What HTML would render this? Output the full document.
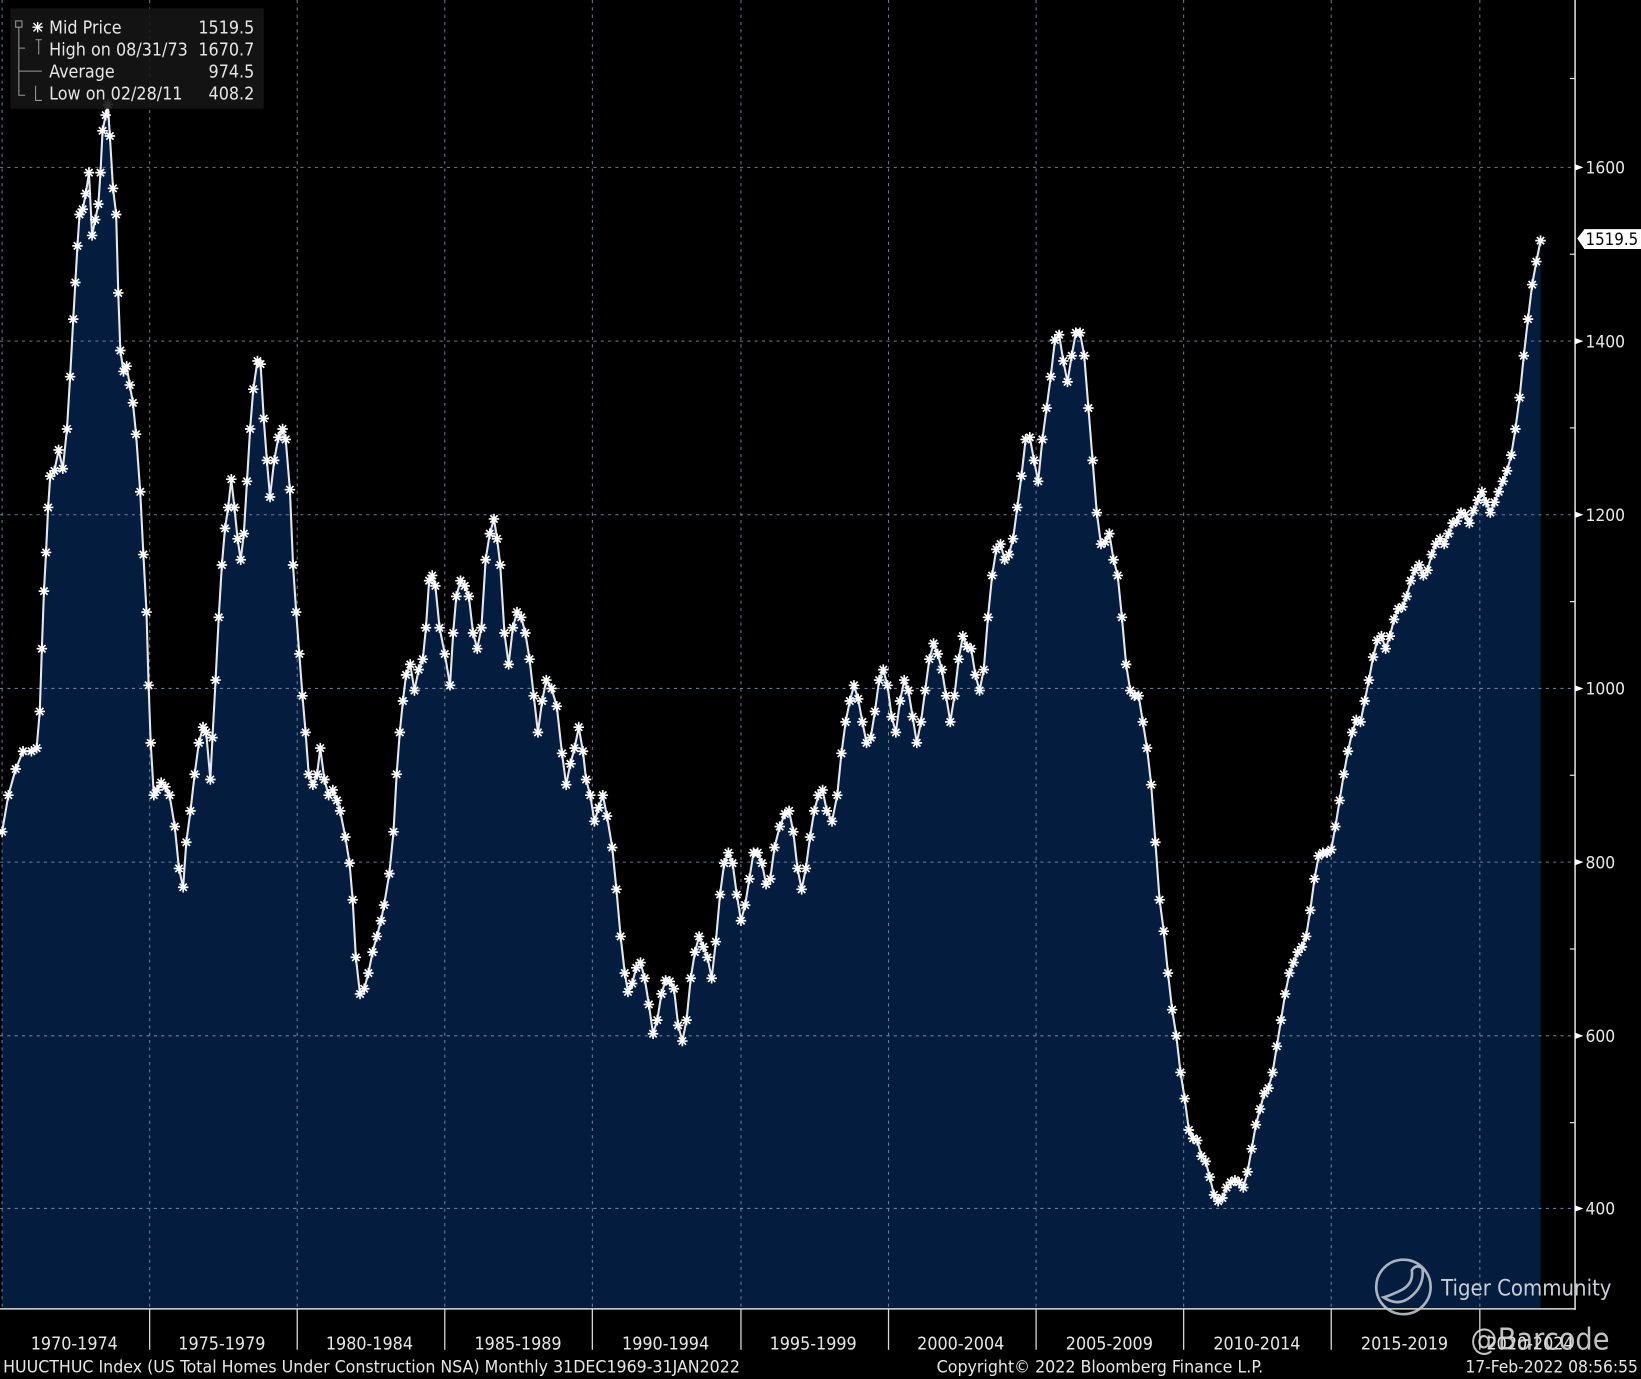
<!DOCTYPE html>
<html><head><meta charset="utf-8">
<style>
html,body{margin:0;padding:0;background:#000;}
body{width:1641px;height:1379px;overflow:hidden;}
svg{display:block;}
text{font-family:"DejaVu Sans Condensed","Liberation Sans",sans-serif;}
</style></head>
<body>
<svg width="1641" height="1379" viewBox="0 0 1568 1318" preserveAspectRatio="none" xmlns="http://www.w3.org/2000/svg">
<defs>
<marker id="st" markerWidth="12" markerHeight="12" refX="6" refY="6" markerUnits="userSpaceOnUse">
<path d="M1,6H11M6,1V11M2.5,2.5L9.5,9.5M2.5,9.5L9.5,2.5" stroke="#fff" stroke-width="1.6"/>
<circle cx="6" cy="6" r="1.8" fill="#fff"/>
</marker>
</defs>
<rect width="1568" height="1318" fill="#000"/>
<polygon fill="#041d3f" points="2,1250 2,795 8,760 15,735 22,718 30,718 35,715 38,680 40,620 42,565 44,528 46,485 48,455 52,450 56,430 60,448 64,410 67,360 70,305 72,270 74,235 76,205 79,200 82,185 85,165 88,225 91,210 94,195 96,165 98,125 101,110 103,100 105,130 108,180 111,205 113,280 115,335 118,355 121,350 124,368 127,385 130,415 134,470 137,530 140,585 142,655 144,710 147,760 150,755 154,748 158,752 162,760 167,790 171,830 175,848 178,805 182,775 186,740 190,710 194,695 197,700 201,745 203,705 206,650 209,590 212,540 215,505 218,485 221,458 224,485 227,515 230,535 233,510 236,460 239,410 242,372 246,345 249,348 252,400 255,440 258,475 262,440 266,418 270,410 273,420 277,468 280,540 283,585 286,625 289,665 292,700 295,740 299,750 303,740 306,715 310,745 314,760 318,755 322,765 325,775 330,800 334,825 337,860 340,915 344,950 348,945 352,930 356,910 360,895 364,880 367,865 372,835 376,795 379,740 382,700 385,670 388,645 392,635 396,660 400,640 404,630 407,600 410,555 413,550 416,560 420,600 425,625 430,655 433,605 436,570 440,555 444,560 448,570 452,605 456,620 460,600 464,535 468,510 472,496 475,515 478,540 482,605 486,635 490,600 494,585 498,590 502,605 506,630 510,665 514,700 518,670 522,650 527,658 532,675 537,720 541,750 545,730 549,715 553,695 557,718 560,745 564,760 568,785 572,772 576,760 580,780 585,810 589,850 593,895 597,930 600,948 604,940 608,925 612,920 616,935 620,960 624,988 628,975 632,950 636,937 640,938 644,945 648,980 652,995 656,975 660,935 664,910 668,895 672,905 676,915 680,935 684,900 688,855 692,825 696,815 700,825 704,855 708,880 712,865 716,840 720,815 724,815 728,825 732,845 736,840 740,810 745,790 750,778 754,775 758,795 762,830 766,850 770,830 774,800 778,775 782,760 786,755 790,775 795,785 800,760 804,720 808,690 812,670 816,655 820,668 824,690 828,710 832,705 836,680 840,650 844,640 848,655 852,685 856,700 860,670 864,650 868,660 872,685 876,710 880,690 884,660 888,630 892,615 896,625 900,640 904,665 908,690 912,665 916,630 920,608 924,618 928,620 932,645 936,660 940,640 944,590 948,550 952,525 956,520 960,535 964,530 968,515 972,485 976,455 980,420 984,418 988,440 992,460 996,420 1000,390 1004,360 1008,325 1012,320 1016,345 1020,365 1024,340 1028,318 1032,318 1036,340 1040,390 1044,440 1048,490 1052,520 1056,518 1060,510 1064,535 1068,550 1072,590 1076,635 1080,660 1084,665 1088,665 1092,690 1096,715 1100,750 1104,805 1108,860 1112,890 1116,930 1120,965 1124,990 1128,1025 1132,1050 1136,1080 1140,1088 1144,1090 1148,1105 1152,1110 1156,1125 1160,1142 1164,1148 1168,1145 1172,1135 1176,1130 1180,1128 1184,1130 1188,1135 1192,1120 1196,1098 1200,1075 1204,1060 1208,1045 1212,1040 1216,1025 1220,1000 1224,975 1228,950 1232,930 1236,920 1240,910 1244,905 1248,895 1252,870 1256,840 1260,818 1264,815 1268,815 1272,812 1276,790 1280,765 1284,740 1288,718 1292,700 1296,688 1300,690 1304,670 1308,650 1312,628 1316,612 1320,608 1324,620 1328,608 1332,592 1336,582 1340,580 1344,570 1348,555 1352,545 1356,540 1360,550 1364,545 1368,530 1372,520 1376,515 1380,520 1384,510 1388,500 1392,498 1396,490 1400,492 1404,500 1408,488 1412,478 1416,470 1420,480 1424,490 1428,480 1432,470 1436,460 1440,450 1444,435 1448,410 1452,380 1456,340 1460,305 1464,272 1468,250 1472,230 1472,1250"/>
<g stroke="#8aa2c0" stroke-width="1" stroke-dasharray="3,4" opacity="0.75">
<path d="M0,160H1504M0,326H1504M0,492H1504M0,658H1504M0,824H1504M0,990H1504M0,1155H1504"/>
<path d="M2,0V1250M143,0V1250M284,0V1250M425,0V1250M566,0V1250M708,0V1250M849,0V1250M990,0V1250M1131,0V1250M1272,0V1250M1414,0V1250"/>
</g>
<polyline fill="none" stroke="#e4e8ee" stroke-width="2" marker-start="url(#st)" marker-mid="url(#st)" marker-end="url(#st)" points="2,795 8,760 15,735 22,718 30,718 35,715 38,680 40,620 42,565 44,528 46,485 48,455 52,450 56,430 60,448 64,410 67,360 70,305 72,270 74,235 76,205 79,200 82,185 85,165 88,225 91,210 94,195 96,165 98,125 101,110 103,100 105,130 108,180 111,205 113,280 115,335 118,355 121,350 124,368 127,385 130,415 134,470 137,530 140,585 142,655 144,710 147,760 150,755 154,748 158,752 162,760 167,790 171,830 175,848 178,805 182,775 186,740 190,710 194,695 197,700 201,745 203,705 206,650 209,590 212,540 215,505 218,485 221,458 224,485 227,515 230,535 233,510 236,460 239,410 242,372 246,345 249,348 252,400 255,440 258,475 262,440 266,418 270,410 273,420 277,468 280,540 283,585 286,625 289,665 292,700 295,740 299,750 303,740 306,715 310,745 314,760 318,755 322,765 325,775 330,800 334,825 337,860 340,915 344,950 348,945 352,930 356,910 360,895 364,880 367,865 372,835 376,795 379,740 382,700 385,670 388,645 392,635 396,660 400,640 404,630 407,600 410,555 413,550 416,560 420,600 425,625 430,655 433,605 436,570 440,555 444,560 448,570 452,605 456,620 460,600 464,535 468,510 472,496 475,515 478,540 482,605 486,635 490,600 494,585 498,590 502,605 506,630 510,665 514,700 518,670 522,650 527,658 532,675 537,720 541,750 545,730 549,715 553,695 557,718 560,745 564,760 568,785 572,772 576,760 580,780 585,810 589,850 593,895 597,930 600,948 604,940 608,925 612,920 616,935 620,960 624,988 628,975 632,950 636,937 640,938 644,945 648,980 652,995 656,975 660,935 664,910 668,895 672,905 676,915 680,935 684,900 688,855 692,825 696,815 700,825 704,855 708,880 712,865 716,840 720,815 724,815 728,825 732,845 736,840 740,810 745,790 750,778 754,775 758,795 762,830 766,850 770,830 774,800 778,775 782,760 786,755 790,775 795,785 800,760 804,720 808,690 812,670 816,655 820,668 824,690 828,710 832,705 836,680 840,650 844,640 848,655 852,685 856,700 860,670 864,650 868,660 872,685 876,710 880,690 884,660 888,630 892,615 896,625 900,640 904,665 908,690 912,665 916,630 920,608 924,618 928,620 932,645 936,660 940,640 944,590 948,550 952,525 956,520 960,535 964,530 968,515 972,485 976,455 980,420 984,418 988,440 992,460 996,420 1000,390 1004,360 1008,325 1012,320 1016,345 1020,365 1024,340 1028,318 1032,318 1036,340 1040,390 1044,440 1048,490 1052,520 1056,518 1060,510 1064,535 1068,550 1072,590 1076,635 1080,660 1084,665 1088,665 1092,690 1096,715 1100,750 1104,805 1108,860 1112,890 1116,930 1120,965 1124,990 1128,1025 1132,1050 1136,1080 1140,1088 1144,1090 1148,1105 1152,1110 1156,1125 1160,1142 1164,1148 1168,1145 1172,1135 1176,1130 1180,1128 1184,1130 1188,1135 1192,1120 1196,1098 1200,1075 1204,1060 1208,1045 1212,1040 1216,1025 1220,1000 1224,975 1228,950 1232,930 1236,920 1240,910 1244,905 1248,895 1252,870 1256,840 1260,818 1264,815 1268,815 1272,812 1276,790 1280,765 1284,740 1288,718 1292,700 1296,688 1300,690 1304,670 1308,650 1312,628 1316,612 1320,608 1324,620 1328,608 1332,592 1336,582 1340,580 1344,570 1348,555 1352,545 1356,540 1360,550 1364,545 1368,530 1372,520 1376,515 1380,520 1384,510 1388,500 1392,498 1396,490 1400,492 1404,500 1408,488 1412,478 1416,470 1420,480 1424,490 1428,480 1432,470 1436,460 1440,450 1444,435 1448,410 1452,380 1456,340 1460,305 1464,272 1468,250 1472,230"/>
<path d="M1505,0V1252M0,1251H1505" stroke="#ddd" stroke-width="1.5"/>
<g stroke="#ddd" stroke-width="1.2">
<path d="M143,1251V1290M284,1251V1290M425,1251V1290M566,1251V1290M708,1251V1290M849,1251V1290M990,1251V1290M1131,1251V1290M1272,1251V1290M1414,1251V1290"/>
<path d="M1500,75H1505M1500,243H1505M1500,409H1505M1500,575H1505M1500,741H1505M1500,907H1505M1500,1073H1505"/>
</g>
<g fill="#fff">
<path d="M1505,157l8,3l-8,3zM1505,323l8,3l-8,3zM1505,489l8,3l-8,3zM1505,655l8,3l-8,3zM1505,821l8,3l-8,3zM1505,987l8,3l-8,3zM1505,1152l8,3l-8,3z"/>
</g>
<g fill="#e8e8e8" font-size="16.5">
<text x="1515" y="166">1600</text><text x="1515" y="332">1400</text><text x="1515" y="498">1200</text><text x="1515" y="664">1000</text><text x="1515" y="830">800</text><text x="1515" y="996">600</text><text x="1515" y="1161">400</text>
</g>
<path d="M1507,228l7,-9h54v19h-54z" fill="#fff"/>
<text x="1515" y="234" font-size="16" fill="#000">1519.5</text>
<rect x="10" y="8" width="242" height="96" fill="#151515" opacity="0.9"/>
<g fill="#e6e6e6" font-size="17">
<text x="47" y="32">Mid Price</text><text x="243" y="32" text-anchor="end">1519.5</text>
<text x="47" y="53">High on 08/31/73</text><text x="243" y="53" text-anchor="end">1670.7</text>
<text x="47" y="74">Average</text><text x="243" y="74" text-anchor="end">974.5</text>
<text x="47" y="95">Low on 02/28/11</text><text x="243" y="95" text-anchor="end">408.2</text>
</g>
<g stroke="#999" stroke-width="1" fill="none">
<rect x="15" y="20" width="6" height="6"/><path d="M18,26V91H24M18,46H24M18,68H40"/><path d="M34,38H40M37,38V52M34,82V96H40"/>
</g>
<path d="M31,26H41M36,21V31M32,22L40,30M32,30L40,22" stroke="#fff" stroke-width="1.3"/>
<g fill="#e6e6e6" font-size="17" text-anchor="middle">
<text x="71" y="1290">1970-1974</text><text x="212" y="1290">1975-1979</text><text x="353" y="1290">1980-1984</text><text x="495" y="1290">1985-1989</text><text x="636" y="1290">1990-1994</text><text x="777" y="1290">1995-1999</text><text x="918" y="1290">2000-2004</text><text x="1060" y="1290">2005-2009</text><text x="1201" y="1290">2010-2014</text><text x="1342" y="1290">2015-2019</text><text x="1462" y="1290">2020-2024</text>
</g>
<g fill="#e6e6e6" font-size="16.5">
<text x="3" y="1312" textLength="704" lengthAdjust="spacingAndGlyphs">HUUCTHUC Index (US Total Homes Under Construction NSA)  Monthly 31DEC1969-31JAN2022</text>
<text x="895" y="1312" textLength="312" lengthAdjust="spacingAndGlyphs">Copyright© 2022 Bloomberg Finance L.P.</text>
<text x="1565" y="1312" text-anchor="end">17-Feb-2022 08:56:55</text>
</g>
<g stroke="#c8ced6" stroke-width="2.5" fill="none" opacity="0.85">
<circle cx="1341" cy="1230" r="26"/>
<path d="M1322,1240q18,12 33,-8q6,-10 4,-20q-6,-4 -10,2q2,14 -12,20q-8,4 -15,6z"/>
</g>
<text x="1377" y="1238" font-size="21" fill="#c8ced6" font-family="Liberation Sans,sans-serif">Tiger Community</text>
<text x="1405" y="1290" font-size="29" fill="#d8d8d8" font-family="Liberation Sans,sans-serif" opacity="0.9">@Barcode</text>
</svg>
</body></html>
